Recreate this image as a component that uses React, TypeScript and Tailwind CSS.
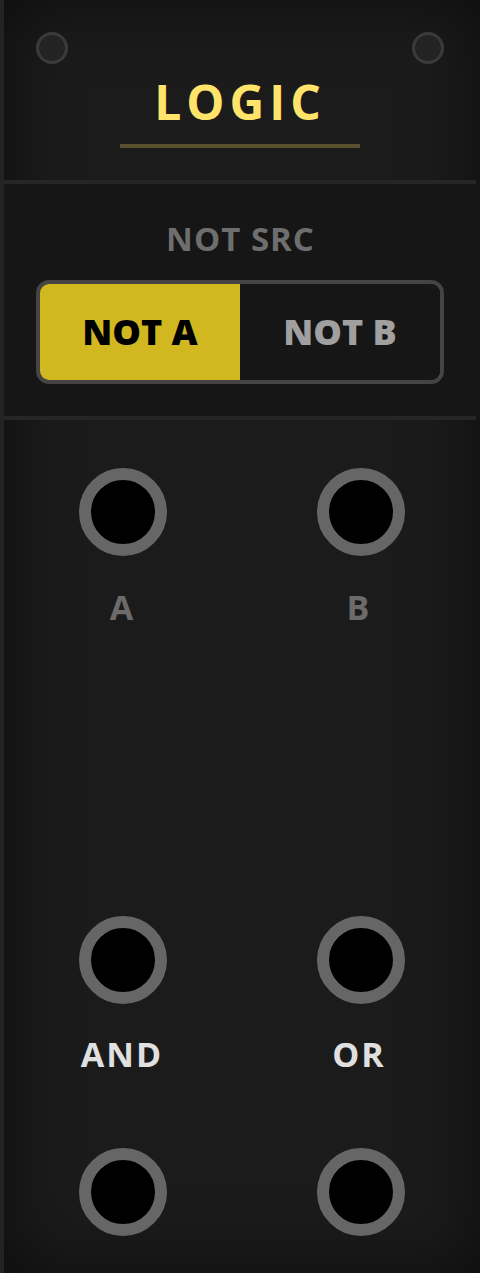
import React from "react";

function Screw() {
  return <div className="w-[32px] h-[32px] rounded-full border-[3px] border-[#3b3b3b] bg-[#232323]" />;
}

function Jack() {
  return <div className="w-[88px] h-[88px] rounded-full border-[12px] border-[#666666] bg-black" />;
}

export default function App() {
  return (
    <div
      className="relative w-[480px] h-[1273px] overflow-hidden bg-[#1b1b1b] border-l-4 border-l-[#232323] shadow-[inset_0_0_70px_rgba(0,0,0,0.55)]"
      style={{ fontFamily: "'Open Sans', 'Noto Sans', sans-serif" }}
    >
      {/* header */}
      <div className="relative h-[180px] flex flex-col items-center pr-[4px]">
        <div className="absolute left-[32px] top-[32px]">
          <Screw />
        </div>
        <div className="absolute right-[36px] top-[32px]">
          <Screw />
        </div>
        <div className="pt-[78px] text-[48px] leading-[48px] font-bold tracking-[5px] text-[#ffe36a]">
          LOGIC
        </div>
        <div className="mt-[18px] w-[240px] h-[4px] bg-[#5a5030]" />
      </div>

      {/* toggle section */}
      <div className="h-[4px] mr-[4px] bg-[#262626]" />
      <div className="h-[232px] bg-[#161616] flex flex-col items-center pt-[38px] pr-[4px]">
        <div className="text-[33px] leading-[33px] font-bold tracking-[1px] pl-[1px] text-[#6e6e6e]">NOT SRC</div>
        <div className="mt-[25px] w-[408px] h-[104px] border-4 border-[#444444] rounded-[13px] overflow-hidden grid grid-cols-2">
          <div className="bg-[#d1b720] flex items-center justify-center text-[36px] font-extrabold text-black">NOT A</div>
          <div className="bg-[#161616] flex items-center justify-center text-[36px] font-extrabold text-[#a0a0a0]">NOT B</div>
        </div>
      </div>
      <div className="h-[4px] mr-[4px] bg-[#262626]" />

      {/* jacks */}
      <div className="grid grid-cols-2 pt-[48px]">
        <div className="flex flex-col items-center">
          <Jack />
          <div className="mt-[34px] mr-[3px] text-[34px] leading-[34px] font-bold text-[#6b6b6b]">A</div>
        </div>
        <div className="flex flex-col items-center">
          <Jack />
          <div className="mt-[34px] mr-[6px] text-[34px] leading-[34px] font-bold text-[#6b6b6b]">B</div>
        </div>
      </div>
      <div className="grid grid-cols-2 mt-[292px]">
        <div className="flex flex-col items-center">
          <Jack />
          <div className="mt-[33px] mr-[2px] text-[34px] leading-[34px] font-bold tracking-[2px] text-[#e0e0e0]">AND</div>
        </div>
        <div className="flex flex-col items-center">
          <Jack />
          <div className="mt-[33px] mr-[4px] text-[34px] leading-[34px] font-bold tracking-[2px] text-[#e0e0e0]">OR</div>
        </div>
      </div>
      <div className="grid grid-cols-2 mt-[77px]">
        <div className="flex flex-col items-center">
          <Jack />
        </div>
        <div className="flex flex-col items-center">
          <Jack />
        </div>
      </div>
    </div>
  );
}
